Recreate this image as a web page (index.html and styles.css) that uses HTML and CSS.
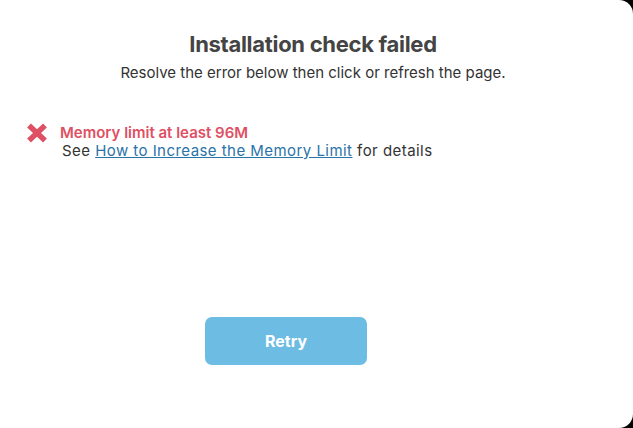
FILE: index.html
```html
<!DOCTYPE html>
<html lang="en">
<head>
    <meta charset="UTF-8">
    <title>Installation check failed</title>
    <link rel="stylesheet" href="styles.css">
</head>
<body>
    <div class="panel">
        <div class="header">
            <h1>Installation check failed</h1>
            <p>Resolve the error below then click or refresh the page.</p>
        </div>

        <div class="checks">
            <div class="check">
                <svg class="check-icon" width="22" height="20" viewBox="0 0 22 20">
                    <path d="M3 2.5 L19 17.5 M19 2.5 L3 17.5" stroke="#de5064" stroke-width="5.5" stroke-linecap="butt" fill="none"/>
                </svg>
                <div class="check-body">
                    <div class="check-title">Memory limit at least 96M</div>
                    <div class="check-help">See <a href="#">How to Increase the Memory Limit</a> for details</div>
                </div>
            </div>
        </div>

        <div class="actions">
            <button class="retry">Retry</button>
        </div>
    </div>
</body>
</html>
```

FILE: styles.css
```css
html, body {
    margin: 0;
    padding: 0;
    background-color: #000;
}
body {
    font-family: Inter, 'Helvetica Neue', 'Liberation Sans', sans-serif;
    color: #333;
}
.panel {
    width: 633px;
    height: 428px;
    background-color: #fff;
    border-radius: 0 14px 14px 0;
    box-sizing: border-box;
    padding-top: 30px;
    display: flex;
    flex-direction: column;
}
.header {
    text-align: center;
    padding-right: 7px;
}
.header h1 {
    margin: 0;
    font-size: 22px;
    font-weight: 700;
    color: #444;
    letter-spacing: -0.3px;
    line-height: 28px;
}
.header p {
    margin: 6px 0 0;
    font-size: 15px;
    color: #333;
    line-height: 18px;
}
.checks {
    margin-top: 42px;
    padding-left: 26px;
}
.check {
    display: flex;
    gap: 12px;
}
.check-icon {
    flex: none;
    margin-top: -1px;
}
.check-title {
    color: #de5064;
    font-weight: 600;
    font-size: 15px;
    line-height: 18px;
}
.check-help {
    font-size: 15px;
    line-height: 18px;
    letter-spacing: 0.45px;
    margin-left: 2px;
}
.check-help a {
    color: #2a73a8;
}
.actions {
    margin-top: auto;
    margin-bottom: 63px;
    padding-left: 205px;
}
.retry {
    width: 162px;
    height: 48px;
    border: none;
    border-radius: 7px;
    background-color: #6dbce3;
    color: #fff;
    font-family: inherit;
    font-size: 16px;
    font-weight: 700;
}
```
